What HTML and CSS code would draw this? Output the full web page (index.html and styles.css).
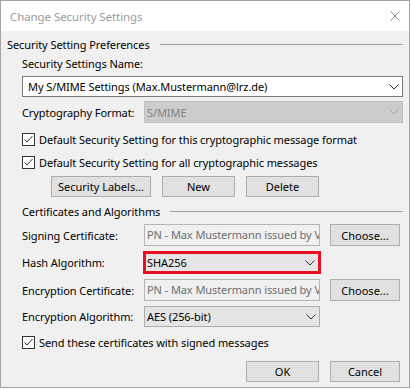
FILE: index.html
```html
<!DOCTYPE html>
<html lang="en">
<head>
    <meta charset="UTF-8">
    <title>Change Security Settings</title>
    <link rel="stylesheet" href="styles.css">
</head>
<body>
    <div class="window">
        <div class="titlebar">
            <span class="title">Change Security Settings</span>
            <svg class="close" width="10" height="10" viewBox="0 0 10 10">
                <path d="M0.5 0.5 L9.5 9.5 M9.5 0.5 L0.5 9.5" stroke="#8c8c8c" stroke-width="1" fill="none"/>
            </svg>
        </div>
        <div class="content">
            <div class="group-head">
                <span>Security Setting Preferences</span>
                <span class="rule"></span>
            </div>
            <div class="indent">
                <div class="name-label">Security Settings Name:</div>
                <div class="combo editable">
                    <span>My S/MIME Settings (Max.Mustermann@lrz.de)</span>
                    <svg class="chevron" width="10" height="6" viewBox="0 0 10 6"><path d="M0.5 0.5 L5 5 L9.5 0.5" stroke="#333" fill="none"/></svg>
                </div>
                <div class="field-row format-row">
                    <span class="label">Cryptography Format:</span>
                    <div class="combo disabled">
                        <span>S/MIME</span>
                        <svg class="chevron" width="10" height="6" viewBox="0 0 10 6"><path d="M0.5 0.5 L5 5 L9.5 0.5" stroke="#a6a6a6" fill="none"/></svg>
                    </div>
                </div>
                <div class="check first">
                    <span class="box"><svg width="11" height="11" viewBox="0 0 11 11"><path d="M1.5 5.5 L4 8 L9.5 2" stroke="#333" fill="none"/></svg></span>
                    <span>Default Security Setting for this cryptographic message format</span>
                </div>
                <div class="check">
                    <span class="box"><svg width="11" height="11" viewBox="0 0 11 11"><path d="M1.5 5.5 L4 8 L9.5 2" stroke="#333" fill="none"/></svg></span>
                    <span>Default Security Setting for all cryptographic messages</span>
                </div>
                <div class="actions">
                    <button class="btn wide">Security Labels...</button>
                    <button class="btn">New</button>
                    <button class="btn">Delete</button>
                </div>

                <div class="group-head sub">
                    <span>Certificates and Algorithms</span>
                    <span class="rule"></span>
                </div>
                <div class="cert-grid">
                    <span class="label">Signing Certificate:</span>
                    <div class="field">PN - Max Mustermann issued by V</div>
                    <button class="btn choose">Choose...</button>

                    <span class="label">Hash Algorithm:</span>
                    <div class="combo hash">
                        <span>SHA256</span>
                        <svg class="chevron" width="10" height="6" viewBox="0 0 10 6"><path d="M0.5 0.5 L5 5 L9.5 0.5" stroke="#333" fill="none"/></svg>
                    </div>
                    <span></span>

                    <span class="label">Encryption Certificate:</span>
                    <div class="field">PN - Max Mustermann issued by V</div>
                    <button class="btn choose">Choose...</button>

                    <span class="label">Encryption Algorithm:</span>
                    <div class="combo algo">
                        <span>AES (256-bit)</span>
                        <svg class="chevron" width="10" height="6" viewBox="0 0 10 6"><path d="M0.5 0.5 L5 5 L9.5 0.5" stroke="#333" fill="none"/></svg>
                    </div>
                    <span></span>
                </div>
                <div class="check send">
                    <span class="box"><svg width="11" height="11" viewBox="0 0 11 11"><path d="M1.5 5.5 L4 8 L9.5 2" stroke="#333" fill="none"/></svg></span>
                    <span>Send these certificates with signed messages</span>
                </div>
            </div>
            <div class="dialog-buttons">
                <button class="btn">OK</button>
                <button class="btn choose">Cancel</button>
            </div>
        </div>
    </div>
</body>
</html>
```

FILE: styles.css
```css
* {
    box-sizing: border-box;
}
body {
    margin: 0;
    background: #fff;
    font-family: "Noto Sans", sans-serif;
    font-size: 11px;
    letter-spacing: -0.08px;
    color: #000;
}
.window {
    width: 410px;
    height: 388px;
    border: 1px solid #a3a3a3;
    background: #f0f0f0;
    display: flex;
    flex-direction: column;
}
.titlebar {
    height: 30px;
    background: #fff;
    display: flex;
    align-items: center;
    justify-content: space-between;
    padding: 0 9px;
}
.title {
    color: #9b9b9b;
    font-size: 11.5px;
}
.content {
    padding: 6px 6px 0 6px;
}
.group-head {
    display: flex;
    align-items: center;
    gap: 10px;
    height: 16px;
    line-height: 16px;
}
.group-head .rule {
    flex: 1;
    border-top: 1px solid #a0a0a0;
    margin-top: -2px;
}
.group-head.sub {
    margin-top: 7px;
}
.indent {
    margin-left: 15px;
}
.label {
    white-space: nowrap;
}
.name-label {
    margin-top: 3px;
    height: 16px;
    line-height: 16px;
}
.combo {
    display: flex;
    align-items: center;
    justify-content: space-between;
    height: 21px;
    padding: 0 3px 0 2px;
    border: 1px solid #adadad;
    background: #e5e5e5;
    white-space: nowrap;
}
.combo.editable {
    margin-top: 4px;
    background: #fff;
    border-color: #7a7a7a;
    padding-left: 5px;
}
.field-row {
    display: flex;
    align-items: center;
}
.format-row {
    margin-top: 4px;
    height: 22px;
}
.format-row .label {
    width: 122px;
}
.combo.disabled {
    flex: 1;
    height: 22px;
    background: #cccccc;
    border-color: #bfbfbf;
    color: #838383;
}
.check {
    display: flex;
    align-items: center;
    gap: 4px;
    height: 16px;
}
.check.first {
    margin-top: 8px;
}
.check + .check {
    margin-top: 7px;
}
.check.send {
    margin-top: 7px;
}
.box {
    width: 13px;
    height: 13px;
    border: 1px solid #333;
    background: #fff;
    display: flex;
}
.actions {
    margin-top: 6px;
    display: flex;
    gap: 11px;
    padding-left: 29px;
}
.btn {
    height: 21px;
    width: 73px;
    padding: 0;
    border: 1px solid #adadad;
    background: #e1e1e1;
    font: inherit;
    color: #000;
}
.btn.wide {
    width: 100px;
}
.btn.choose {
    width: 70px;
}
.cert-grid {
    margin-top: 4px;
    display: grid;
    grid-template-columns: 112px 176px 70px;
    grid-template-rows: 22px 23px 22px 21px;
    column-gap: 10px;
    row-gap: 5px;
    align-items: center;
}
.field {
    height: 22px;
    line-height: 20px;
    padding: 0 2px;
    border: 1px solid #b5b5b5;
    background: #f0f0f0;
    color: #6d6d6d;
    white-space: nowrap;
    overflow: hidden;
}
.cert-grid .btn.choose {
    height: 22px;
}
.combo.hash {
    height: 23px;
    border: 3px solid #e81123;
    padding-left: 1px;
    margin-left: -1px;
    margin-right: -1px;
}
.dialog-buttons {
    margin-top: 11px;
    display: flex;
    justify-content: flex-end;
    gap: 11px;
    padding-right: 3px;
}
```
